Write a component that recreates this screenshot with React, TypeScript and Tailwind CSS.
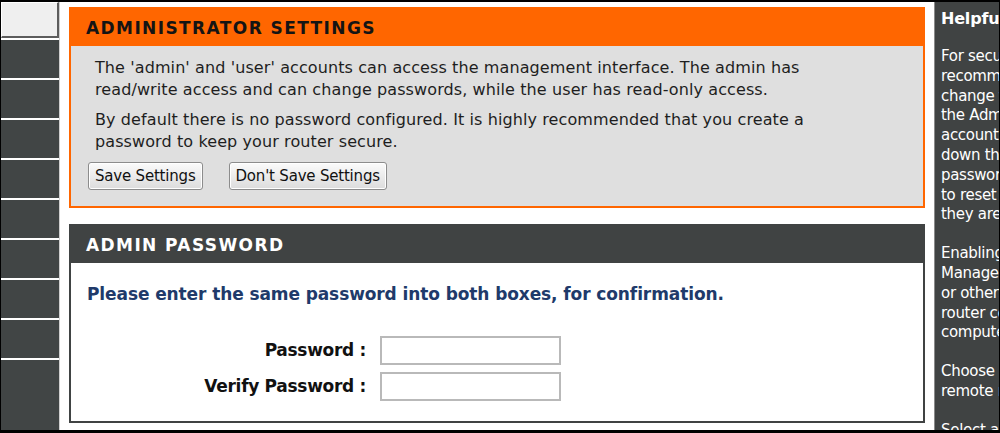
import React from "react";

const helpful: string[][] = [
  [
    "For security reasons, it is",
    "recommended that you",
    "change the password for",
    "the Admin and User",
    "accounts. Be sure to write",
    "down the new and",
    "passwords to avoid having",
    "to reset the router in case",
    "they are forgotten.",
  ],
  [
    "Enabling Remote",
    "Management, allows you",
    "or others to change the",
    "router configuration from a",
    "computer on the Internet.",
  ],
  ["Choose a port to open for", "remote management."],
  ["Select a filter that controls"],
];

function Btn({ children }: { children: React.ReactNode }) {
  return (
    <button className="h-[28px] px-[6px] rounded-[3px] border border-[#8c8c8c] bg-gradient-to-b from-[#fbfbfb] to-[#dcdcdc] text-[15px] text-[#111] shadow-[inset_0_0_0_1px_#ffffff] leading-none tracking-[-0.2px]">
      {children}
    </button>
  );
}

export default function App() {
  return (
    <div
      className="w-[1000px] h-[433px] bg-black flex overflow-hidden pt-[2px] pb-[3px] pl-[1px] pr-[1px]"
      style={{ fontFamily: '"DejaVu Sans", Verdana, sans-serif' }}
    >
      {/* left nav */}
      <div className="w-[58px] shrink-0 flex flex-col bg-white">
        <div className="h-[36px] mb-[2px] bg-[#efefef] border-t border-l border-white border-r-2 border-b-2 border-r-[#5c5c5c] border-b-[#5c5c5c]" />
        {Array.from({ length: 8 }).map((_, i) => (
          <div key={i} className="h-[38px] mb-[2px] bg-[#414545]" />
        ))}
        <div className="flex-1 bg-[#414545]" />
      </div>

      {/* main */}
      <div className="w-[875px] shrink-0 bg-white border-l border-[#cfcfcf] pl-[9px] pr-[9px] pt-[5px]">
        {/* Administrator settings */}
        <div className="border-2 border-[#ff6600]">
          <div className="h-[37px] bg-[#ff6600] flex items-center pl-[15px] pt-[2px]">
            <span className="text-[17px] font-bold tracking-[1.4px] text-[#141414]">
              ADMINISTRATOR SETTINGS
            </span>
          </div>
          <div className="bg-[#dfdfdf] pt-[11px] pb-[16px] pl-[17px] text-[16px] leading-[22px] text-[#1e1e1e]">
            <p className="ml-[7px] tracking-[0.1px]">
              The 'admin' and 'user' accounts can access the management interface. The admin has
              <br />
              read/write access and can change passwords, while the user has read-only access.
            </p>
            <p className="ml-[7px] mt-[8px] tracking-[0.1px]">
              By default there is no password configured. It is highly recommended that you create a
              <br />
              password to keep your router secure.
            </p>
            <div className="mt-[9px] flex gap-[26px]">
              <Btn>Save Settings</Btn>
              <Btn>Don't Save Settings</Btn>
            </div>
          </div>
        </div>

        {/* Admin password */}
        <div className="mt-[16px] border-2 border-[#404343]">
          <div className="h-[37px] bg-[#404343] flex items-center pl-[15px] pt-[2px]">
            <span className="text-[17px] font-bold tracking-[1.4px] text-white">ADMIN PASSWORD</span>
          </div>
          <div className="bg-white pt-[20px] pb-[20px] pl-[16px]">
            <p className="text-[17px] leading-[22px] font-bold text-[#203a6a] tracking-[-0.1px]">
              Please enter the same password into both boxes, for confirmation.
            </p>
            <div className="mt-[31px] grid grid-cols-[279px_181px] gap-x-[14px] gap-y-[7px] items-center">
              <div className="text-right text-[17px] font-bold text-[#111] tracking-[-0.3px]">Password :</div>
              <input type="password" className="h-[29px] border-2 border-[#b9b9b9] bg-white outline-none" />
              <div className="text-right text-[17px] font-bold text-[#111] tracking-[-0.3px]">Verify Password :</div>
              <input type="password" className="h-[29px] border-2 border-[#b9b9b9] bg-white outline-none" />
            </div>
          </div>
        </div>
      </div>

      {/* helpful hints */}
      <div className="flex-1 min-w-0 overflow-hidden bg-[#404343] border-l border-[#8a8a8a] pl-[6px] pt-[7px] text-white">
        <div className="text-[16px] font-bold leading-[20px] whitespace-nowrap tracking-[-0.2px]">Helpful Hints..</div>
        <div className="mt-[18px] text-[15px] leading-[19.8px] tracking-[-0.3px]">
          {helpful.map((para, i) => (
            <div key={i} className={i === 0 ? "" : "mt-[19px]"}>
              {para.map((l, j) => (
                <div key={j} className="whitespace-nowrap">
                  {l}
                </div>
              ))}
            </div>
          ))}
        </div>
      </div>
    </div>
  );
}
